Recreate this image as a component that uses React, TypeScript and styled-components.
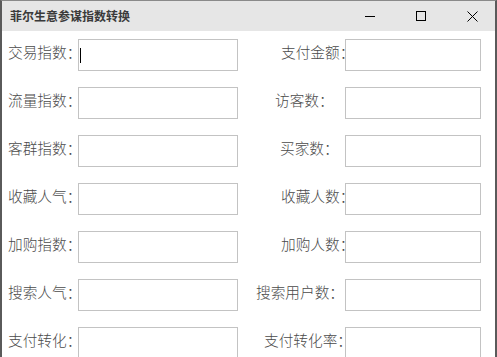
import React from "react";
import styled, { createGlobalStyle } from "styled-components";

const GlobalStyle = createGlobalStyle`
  html, body {
    margin: 0;
    padding: 0;
    background: #ffffff;
    overflow: hidden;
  }
`;

const Window = styled.div`
  width: 497px;
  height: 357px;
  box-sizing: border-box;
  border-left: 2px solid #5a5a5a;
  border-right: 2px solid #5a5a5a;
  border-top: 1px solid #8a8a8a;
  background: #ffffff;
  overflow: hidden;
  font-family: "Noto Sans CJK SC", "Noto Sans", sans-serif;
`;

const TitleBar = styled.div`
  height: 30px;
  background: #e6e6e6;
  display: flex;
  align-items: center;
`;

const Title = styled.div`
  padding-left: 8px;
  font-size: 12px;
  font-weight: bold;
  color: #3a3a3a;
  margin-top: -1px;
`;

const Controls = styled.div`
  margin-left: auto;
  display: flex;
  height: 100%;
`;

const CaptionButton = styled.div`
  width: 51px;
  height: 100%;
  box-sizing: border-box;
  padding-left: 5px;
  display: flex;
  align-items: center;
  justify-content: center;
`;

const Body = styled.div`
  padding-top: 8px;
  display: flex;
  flex-direction: column;
  gap: 16px;
`;

const Row = styled.div`
  display: grid;
  grid-template-columns: 76px 160px 107px 136px;
  height: 32px;
`;

const Label = styled.div<{ $indent: number }>`
  padding-left: ${(p) => p.$indent}px;
  font-size: 14.67px;
  font-weight: 300;
  color: #4a4a4a;
  line-height: 32px;
  margin-top: -3px;
  white-space: nowrap;
`;

const Field = styled.div`
  position: relative;
`;

const Input = styled.input`
  width: 100%;
  height: 32px;
  box-sizing: border-box;
  border: 1px solid #c3c3c3;
  margin: 0;
  padding: 0 2px;
  outline: none;
  background: #ffffff;
  font-family: inherit;
  font-size: 14px;
`;

const Caret = styled.span`
  position: absolute;
  left: 2px;
  top: 9px;
  width: 1px;
  height: 15px;
  background: #000000;
`;

const rows = [
  { left: "交易指数：", right: "支付金额：", indent: 43 },
  { left: "流量指数：", right: "访客数：", indent: 37 },
  { left: "客群指数：", right: "买家数：", indent: 42 },
  { left: "收藏人气：", right: "收藏人数：", indent: 43 },
  { left: "加购指数：", right: "加购人数：", indent: 43 },
  { left: "搜索人气：", right: "搜索用户数：", indent: 18 },
  { left: "支付转化：", right: "支付转化率：", indent: 26 },
];

const App = () => {
  return (
    <>
      <GlobalStyle />
      <Window>
        <TitleBar>
          <Title>菲尔生意参谋指数转换</Title>
          <Controls>
            <CaptionButton>
              <svg width="10" height="10" viewBox="0 0 10 10">
                <line x1="0" y1="5.5" x2="10" y2="5.5" stroke="#000" strokeWidth="1" />
              </svg>
            </CaptionButton>
            <CaptionButton>
              <svg width="10" height="10" viewBox="0 0 10 10">
                <rect x="0.5" y="0.5" width="9" height="9" fill="none" stroke="#000" strokeWidth="1" />
              </svg>
            </CaptionButton>
            <CaptionButton>
              <svg width="11" height="11" viewBox="0 0 11 11">
                <path d="M0.5 0.5 L10.5 10.5 M10.5 0.5 L0.5 10.5" stroke="#000" strokeWidth="1" />
              </svg>
            </CaptionButton>
          </Controls>
        </TitleBar>
        <Body>
          {rows.map((r, i) => (
            <Row key={r.left}>
              <Label $indent={6}>{r.left}</Label>
              <Field>
                <Input type="text" />
                {i === 0 && <Caret />}
              </Field>
              <Label $indent={r.indent}>{r.right}</Label>
              <Field>
                <Input type="text" />
              </Field>
            </Row>
          ))}
        </Body>
      </Window>
    </>
  );
};

export default App;
